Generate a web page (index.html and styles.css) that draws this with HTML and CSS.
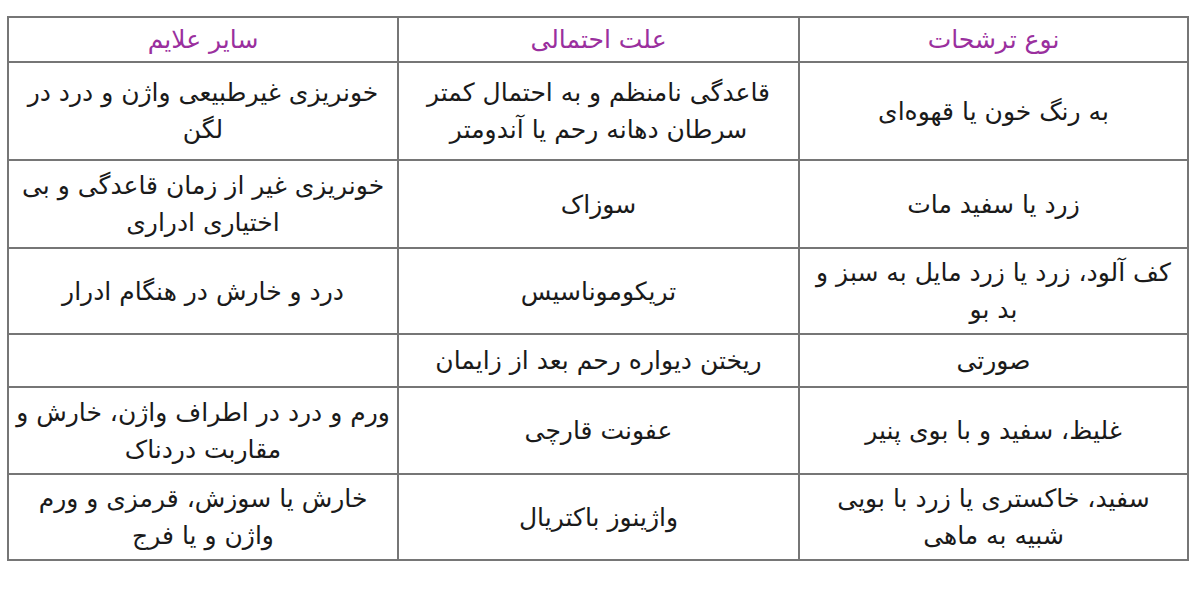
FILE: index.html
```html
<!DOCTYPE html>
<html lang="fa" dir="rtl">
<head>
<meta charset="utf-8">
<link rel="stylesheet" href="styles.css">
</head>
<body>
<table class="grid">
  <colgroup>
    <col class="c-right">
    <col class="c-mid">
    <col class="c-left">
  </colgroup>
  <tr class="head">
    <th>نوع ترشحات</th>
    <th>علت احتمالی</th>
    <th>سایر علایم</th>
  </tr>
  <tr class="r1">
    <td>به رنگ خون یا قهوه‌ای</td>
    <td>قاعدگی نامنظم و به احتمال کمتر<br>سرطان دهانه رحم یا آندومتر</td>
    <td>خونریزی غیرطبیعی واژن و درد در<br>لگن</td>
  </tr>
  <tr class="r2">
    <td>زرد یا سفید مات</td>
    <td>سوزاک</td>
    <td>خونریزی غیر از زمان قاعدگی و بی<br>اختیاری ادراری</td>
  </tr>
  <tr class="r3">
    <td>کف آلود، زرد یا زرد مایل به سبز و<br>بد بو</td>
    <td>تریکوموناسیس</td>
    <td>درد و خارش در هنگام ادرار</td>
  </tr>
  <tr class="r4">
    <td>صورتی</td>
    <td>ریختن دیواره رحم بعد از زایمان</td>
    <td></td>
  </tr>
  <tr class="r5">
    <td>غلیظ، سفید و با بوی پنیر</td>
    <td>عفونت قارچی</td>
    <td>ورم و درد در اطراف واژن، خارش و<br>مقاربت دردناک</td>
  </tr>
  <tr class="r6">
    <td>سفید، خاکستری یا زرد با بویی<br>شبیه به ماهی</td>
    <td>واژینوز باکتریال</td>
    <td>خارش یا سوزش، قرمزی و ورم<br>واژن و یا فرج</td>
  </tr>
</table>
</body>
</html>
```
FILE: styles.css
```css
html, body {
  margin: 0;
  padding: 0;
  background: #ffffff;
}
body {
  font-family: "DejaVu Sans", sans-serif;
  color: #1a1a1a;
  padding: 16px 11px 0 9px;
}
.grid {
  width: 1180px;
  border-collapse: collapse;
  table-layout: fixed;
  border: 2px solid #6a6a6a;
}
.c-right { width: 389px; }
.c-mid { width: 401px; }
.c-left { width: 390px; }
.grid th,
.grid td {
  border: 2px solid #767676;
  text-align: center;
  vertical-align: middle;
  padding: 0;
  font-size: 25px;
  line-height: 37px;
  font-weight: normal;
  white-space: nowrap;
}
.grid th {
  color: #9a2f9e;
  font-size: 25px;
}
.head { height: 45px; }
.r1 { height: 98px; }
.r2 { height: 88px; }
.r3 { height: 86px; }
.r4 { height: 53px; }
.r5 { height: 87px; }
.r6 { height: 86px; }
```
